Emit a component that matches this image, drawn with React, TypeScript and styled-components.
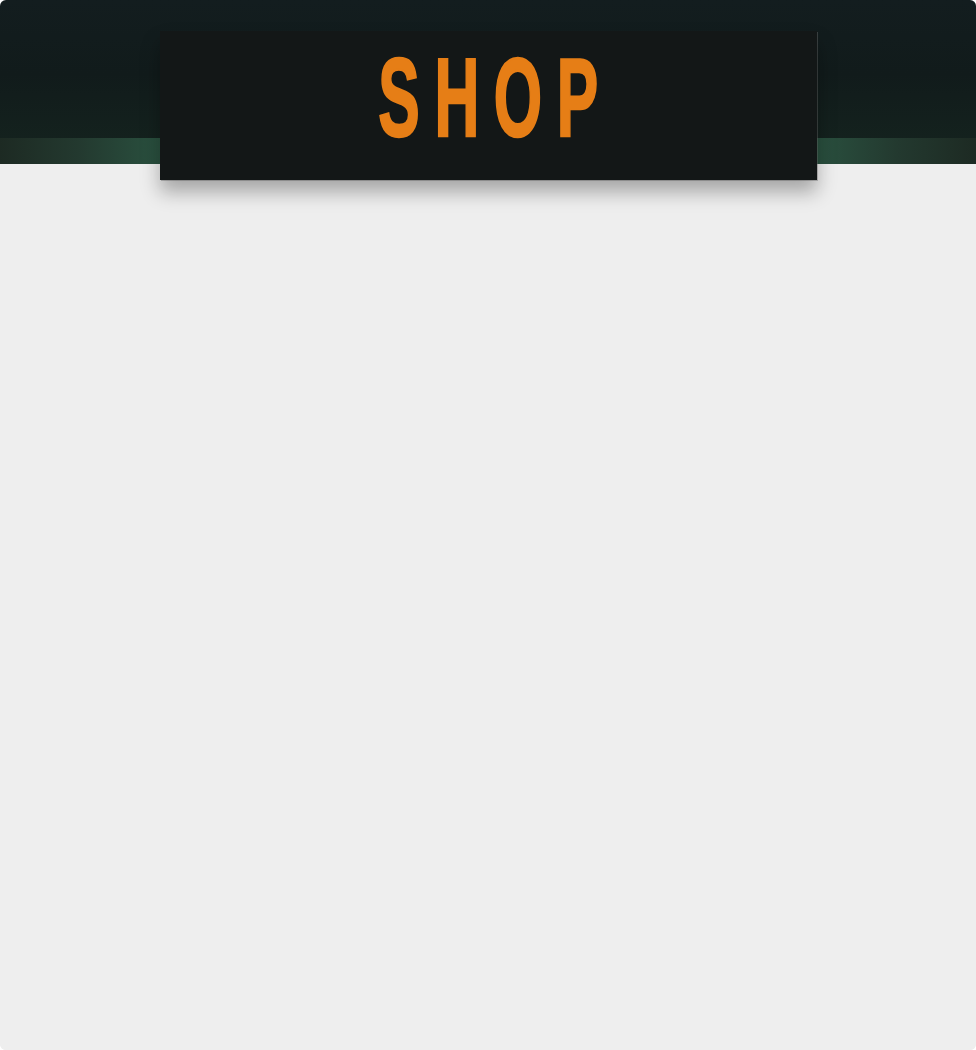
import React from "react";
import styled, { createGlobalStyle } from "styled-components";

const Global = createGlobalStyle`
  html, body { margin: 0; padding: 0; background: #ffffff; }
  body { font-family: "Liberation Sans", Arial, sans-serif; }
`;

const Card = styled.div`
  width: 976px;
  height: 1050px;
  border-radius: 6px;
  overflow: hidden;
  background: #eeeeee;
  display: flex;
  flex-direction: column;
`;

const Header = styled.header`
  height: 164px;
  box-sizing: border-box;
  padding-top: 31px;
  display: flex;
  justify-content: center;
  align-items: flex-start;
  background:
    linear-gradient(
        to right,
        #1d2a23 0%,
        #23392f 8%,
        #2a5240 17%,
        #2a5642 50%,
        #2a5240 83%,
        #23392f 92%,
        #1d2a23 100%
      )
      left bottom / 100% 26px no-repeat,
    linear-gradient(to bottom, #131d1f 0%, #111b1b 45%, #15241f 100%);
`;

const TitlePanel = styled.div`
  position: relative;
  z-index: 1;
  width: 657px;
  height: 149px;
  box-sizing: border-box;
  padding-top: 12px;
  background: #131717;
  box-shadow: 0 12px 18px rgba(0, 0, 0, 0.3), 1px 1px 0 rgba(120, 120, 120, 0.4);
  display: flex;
  justify-content: center;
  align-items: flex-start;
`;

const Title = styled.h1`
  margin: 0;
  font-family: "Liberation Sans", Arial, sans-serif;
  font-weight: 700;
  font-size: 111px;
  line-height: 1;
  letter-spacing: 26px;
  padding-left: 26px;
  color: #e67e16;
  -webkit-text-stroke: 2.5px #e67e16;
  transform: scaleX(0.56);
  transform-origin: center;
  white-space: nowrap;
`;

const Body = styled.main`
  flex: 1;
  background: #eeeeee;
`;

export default function App() {
  return (
    <>
      <Global />
      <Card>
        <Header>
          <TitlePanel>
            <Title>SHOP</Title>
          </TitlePanel>
        </Header>
        <Body />
      </Card>
    </>
  );
}
